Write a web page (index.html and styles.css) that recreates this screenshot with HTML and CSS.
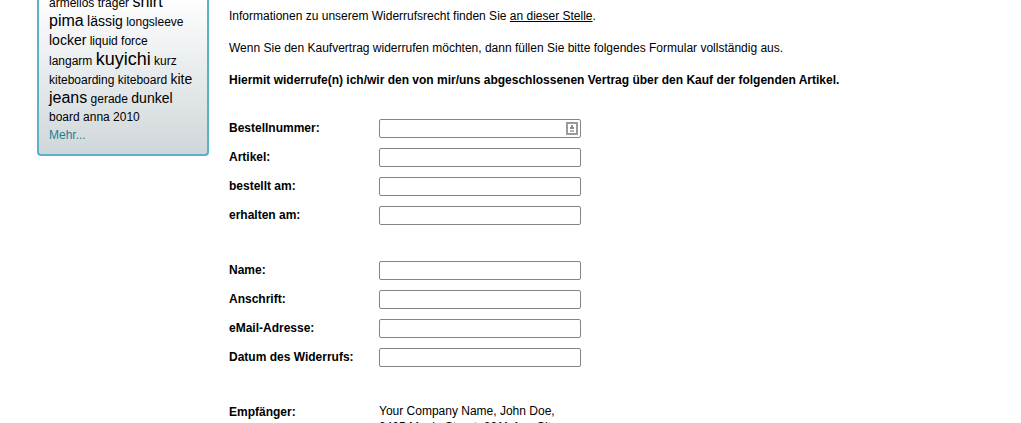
FILE: index.html
```
<!DOCTYPE html>
<html lang="de">
<head>
  <meta charset="utf-8">
  <title>Widerrufsformular</title>
  <link rel="stylesheet" href="styles.css">
</head>
<body>
<div class="page">

  <aside class="sidebar">
    <div class="tagcloud">
      <a class="tag s1" href="#">armellos</a> <a class="tag s1" href="#">träger</a> <a class="tag s3" href="#">shirt</a><br>
      <a class="tag s3" href="#">pima</a> <a class="tag s2" href="#">lässig</a> <a class="tag s1" href="#">longsleeve</a><br>
      <a class="tag s2" href="#">locker</a> <a class="tag s1" href="#">liquid force</a><br>
      <a class="tag s1" href="#">langarm</a> <a class="tag s4" href="#">kuyichi</a> <a class="tag s1" href="#">kurz</a><br>
      <a class="tag s1" href="#">kiteboarding</a> <a class="tag s1" href="#">kiteboard</a> <a class="tag s2" href="#">kite</a><br>
      <a class="tag s3" href="#">jeans</a> <a class="tag s1" href="#">gerade</a> <a class="tag s2" href="#">dunkel</a><br>
      <a class="tag s1" href="#">board</a> <a class="tag s1" href="#">anna</a> <a class="tag s1" href="#">2010</a><br>
      <a class="more" href="#">Mehr...</a>
    </div>
  </aside>

  <main class="content">
    <p>Informationen zu unserem Widerrufsrecht finden Sie <a href="#">an dieser Stelle</a>.</p>
    <p>Wenn Sie den Kaufvertrag widerrufen möchten, dann füllen Sie bitte folgendes Formular vollständig aus.</p>
    <p><strong>Hiermit widerrufe(n) ich/wir den von mir/uns abgeschlossenen Vertrag über den Kauf der folgenden Artikel.</strong></p>

    <form class="revocation" action="#" method="post">
      <div class="group">
        <div class="row">
          <label for="order_id">Bestellnummer:</label>
          <span class="field">
            <input type="text" id="order_id" name="order_id">
            <svg class="autofill" width="12" height="13" viewBox="0 0 12 13" aria-hidden="true">
              <rect x="1" y="1" width="10" height="11" fill="#fff" stroke="#9a9a9a" stroke-width="2"/>
              <path d="M5 3h2v2h1v2H4V5h1z" fill="#8c8c8c"/>
              <path d="M4 8h4v2H4z" fill="#b4b4b4"/>
            </svg>
          </span>
        </div>
        <div class="row">
          <label for="article">Artikel:</label>
          <span class="field"><input type="text" id="article" name="article"></span>
        </div>
        <div class="row">
          <label for="ordered">bestellt am:</label>
          <span class="field"><input type="text" id="ordered" name="ordered"></span>
        </div>
        <div class="row">
          <label for="received">erhalten am:</label>
          <span class="field"><input type="text" id="received" name="received"></span>
        </div>
      </div>

      <div class="group">
        <div class="row">
          <label for="name">Name:</label>
          <span class="field"><input type="text" id="name" name="name"></span>
        </div>
        <div class="row">
          <label for="address">Anschrift:</label>
          <span class="field"><input type="text" id="address" name="address"></span>
        </div>
        <div class="row">
          <label for="email">eMail-Adresse:</label>
          <span class="field"><input type="text" id="email" name="email"></span>
        </div>
        <div class="row">
          <label for="date">Datum des Widerrufs:</label>
          <span class="field"><input type="text" id="date" name="date"></span>
        </div>
      </div>

      <div class="row recipient">
        <strong>Empfänger:</strong>
        <address>Your Company Name, John Doe,<br>2425 Maple Street, 2011 Any City</address>
      </div>
    </form>
  </main>

</div>
</body>
</html>
```
FILE: styles.css
```
body {
    margin: 0;
    background: #fff;
    color: #000;
    font-family: Arial, "Liberation Sans", sans-serif;
    font-size: 12px;
    line-height: 16px;
    overflow: hidden;
}

a {
    color: #000;
}

.page {
    display: flex;
    align-items: flex-start;
    gap: 20px;
    padding: 0 37px;
}

/* tag cloud */
.sidebar {
    flex: 0 0 172px;
}

.tagcloud {
    margin-top: -7px;
    padding: 0 8px 10px 10px;
    border: 2px solid #5bb1c7;
    border-top: 0;
    border-radius: 0 0 4px 4px;
    background: linear-gradient(#fff, #d0d7da);
    line-height: 18px;
    white-space: nowrap;
}

.tag {
    text-decoration: none;
}

.s1 { font-size: 12px; }
.s2 { font-size: 14px; }
.s3 { font-size: 16px; }
.s4 { font-size: 18px; }

.more {
    color: #1f7f95;
    text-decoration: none;
}

/* text and form */
.content {
    flex: 1;
    padding-top: 8px;
}

.content p {
    margin: 0 0 16px;
}

.revocation {
    margin-top: 31px;
}

.group {
    margin-bottom: 36px;
}

.row {
    display: flex;
    align-items: flex-start;
    margin-bottom: 10px;
}

.row label,
.row strong {
    flex: 0 0 150px;
    padding-top: 1px;
    font-weight: bold;
}

.field {
    position: relative;
    display: flex;
}

.field input {
    box-sizing: border-box;
    width: 202px;
    height: 19px;
    margin: 0;
    padding: 1px 4px;
    border: 1px solid #858585;
    border-radius: 2px;
    background: #fff;
    font: inherit;
}

/* autofill marker inside the input */
.autofill {
    position: absolute;
    top: 3px;
    right: 3px;
}

.recipient address {
    font-style: normal;
}
```
